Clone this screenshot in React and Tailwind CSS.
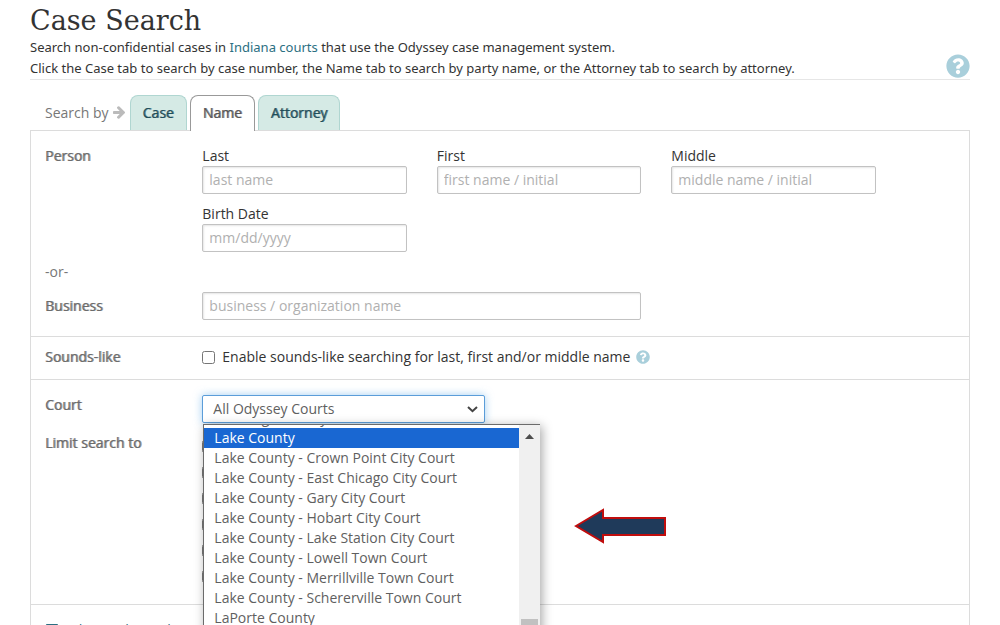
import { useState } from "react";
import { FaQuestionCircle, FaMinusSquare } from "react-icons/fa";

const courts = [
  "LaGrange County",
  "Lake County",
  "Lake County - Crown Point City Court",
  "Lake County - East Chicago City Court",
  "Lake County - Gary City Court",
  "Lake County - Hobart City Court",
  "Lake County - Lake Station City Court",
  "Lake County - Lowell Town Court",
  "Lake County - Merrillville Town Court",
  "Lake County - Schererville Town Court",
  "LaPorte County",
];

const limits = [
  "Civil",
  "Criminal",
  "Family",
  "Probate",
  "Traffic",
  "Commercial",
];

const inputClass =
  "block h-7 w-full rounded-xs border border-[#c2c2c2] bg-white px-1.5 pb-0.5 text-sm text-[#444] placeholder-[#b0b0b0] shadow-[inset_1px_1px_2px_rgba(0,0,0,0.1)] outline-none";

const rowLabelClass =
  "col-span-2 col-start-1 px-3.5 text-[#6b6b6b] [text-shadow:1px_0_#6b6b6bb0]";

const Field = ({ id, label, placeholder }) => (
  <div className="col-span-3 px-[15px]">
    <label htmlFor={id} className="block text-[#333]">
      {label}
    </label>
    <input id={id} type="text" placeholder={placeholder} className={inputClass} />
  </div>
);

const Tab = ({ name, active, onClick }) => (
  <button
    type="button"
    role="tab"
    aria-selected={active}
    onClick={onClick}
    className={
      active
        ? "relative -mb-px h-9 rounded-t-lg border border-b-0 border-[#999] bg-white px-3 pb-0.5 text-[#555] [text-shadow:1px_0_#555555b0]"
        : "h-[35px] rounded-t-lg border border-b-0 border-[#b0d6d1] bg-[#d5eae5] px-3 text-[#1f4e5a] [text-shadow:1px_0_#1f4e5ab0]"
    }
  >
    {name}
  </button>
);

const ArrowRight = () => (
  <svg width="12" height="13" viewBox="0 181 1472 1558" fill="#bbb" aria-hidden="true">
    <path d="M1472 960q0 54-37 91l-651 651q-39 37-91 37-51 0-90-37l-75-75q-38-38-38-91t38-91l293-293H117q-52 0-84.500-37.500T0 1024V896q0-53 32.500-90.500T117 768h704L528 474q-38-36-38-90t38-90l75-75q38-38 90-38 53 0 91 38l651 651q37 35 37 90z" />
  </svg>
);

const CourtMenu = ({ selected, onSelect }) => (
  <div className="absolute top-[29px] left-4 z-10 flex h-[320px] w-[337px] overflow-hidden border border-r-0 border-[#6b6b6b] bg-white shadow-[2px_2px_10px_rgba(0,0,0,0.35)]">
    <ul role="listbox" aria-label="Courts" className="-mt-[17px] flex-1">
      {courts.map((court) => (
        <li
          key={court}
          role="option"
          aria-selected={court === selected}
          onClick={() => onSelect(court)}
          className={
            court === selected
              ? "h-5 cursor-default bg-[#1967d2] px-2.5 text-white"
              : "h-5 cursor-default px-2.5 text-[#5f5f5f]"
          }
        >
          {court}
        </li>
      ))}
    </ul>
    <div className="flex w-[21px] flex-col items-center bg-[#f0f0f0] pt-[9px]">
      <svg width="9" height="5" viewBox="0 0 9 5" aria-hidden="true">
        <path d="M0 5 4.5 0 9 5Z" fill="#4d4d4d" />
      </svg>
      <div className="mt-[180px] h-16 w-[17px] bg-[#c1c1c1]"></div>
    </div>
  </div>
);

const App = () => {
  const [tab, setTab] = useState("Name");
  const [court, setCourt] = useState("Lake County");

  return (
    <div className="h-screen overflow-hidden bg-white px-[30px] font-['Open_Sans','Liberation_Sans',sans-serif] text-sm leading-5 text-[#333]">
      <header className="flex items-end justify-between border-b border-[#e6e6e6]">
        <div>
          <h1 className="h-[37px] font-['DejaVu_Serif',serif] text-[27px] leading-[41px] text-[#333]">
            Case Search
          </h1>
          <p className="font-['Noto_Sans','Open_Sans',sans-serif] text-[13px] leading-[21px]">
            Search non-confidential cases in{" "}
            <a href="#courts" className="text-[#2b6f82]">
              Indiana courts
            </a>{" "}
            that use the Odyssey case management system.
            <br />
            Click the Case tab to search by case number, the Name tab to search
            by party name, or the Attorney tab to search by attorney.
          </p>
        </div>
        <button type="button" aria-label="Help" className="mb-px text-[#a9cfdb]">
          <FaQuestionCircle className="size-6" />
        </button>
      </header>

      <main>
        <div role="tablist" className="flex h-[50px] items-end gap-[3px] pl-[15px]">
          <div className="flex h-[35px] items-center gap-1 pr-0.5 text-[#777]">
            Search by
            <ArrowRight />
          </div>
          {["Case", "Name", "Attorney"].map((name) => (
            <Tab
              key={name}
              name={name}
              active={tab === name}
              onClick={() => setTab(name)}
            />
          ))}
        </div>

        <form className="border border-[#dcdcdc]">
          <section className="grid grid-cols-12 gap-y-2.5 border-b border-[#dcdcdc] pt-[15px] pb-4">
            <h2 className={rowLabelClass}>Person</h2>
            <Field id="last" label="Last" placeholder="last name" />
            <Field id="first" label="First" placeholder="first name / initial" />
            <Field id="middle" label="Middle" placeholder="middle name / initial" />
            <div className="col-span-2 col-start-1"></div>
            <Field id="birth" label="Birth Date" placeholder="mm/dd/yyyy" />
            <p className="col-span-12 px-3.5 text-[#777]">-or-</p>
            <label htmlFor="business" className={`${rowLabelClass} pt-1`}>
              Business
            </label>
            <div className="col-span-6 px-[15px]">
              <input
                id="business"
                type="text"
                placeholder="business / organization name"
                className={inputClass}
              />
            </div>
          </section>

          <section className="grid grid-cols-12 border-b border-[#dcdcdc] pt-2.5 pb-3">
            <h2 className={rowLabelClass}>Sounds-like</h2>
            <div className="col-span-10 flex items-center px-[15px]">
              <input id="sounds" type="checkbox" className="size-[13px]" />
              <label htmlFor="sounds" className="pr-1.5 pl-[7px]">
                Enable sounds-like searching for last, first and/or middle name
              </label>
              <button type="button" aria-label="Sounds-like help" className="text-[#a9cfdb]">
                <FaQuestionCircle className="size-3.5" />
              </button>
            </div>
          </section>

          <section className="grid grid-cols-12 gap-y-2.5 border-b border-[#dcdcdc] pt-[15px] pb-[15px]">
            <label htmlFor="court" className={rowLabelClass}>
              Court
            </label>
            <div className="relative col-span-4 px-[15px]">
              <select
                id="court"
                className="block h-7 w-full appearance-none rounded-xs border border-[#5b9dd9] bg-white px-2.5 text-[#5f5f5f] shadow-[0_0_8px_rgba(102,175,233,0.6)] outline-none"
              >
                <option>All Odyssey Courts</option>
              </select>
              <svg
                className="pointer-events-none absolute top-[11px] right-[22px]"
                width="11"
                height="7"
                viewBox="0 0 11 7"
                fill="none"
                aria-hidden="true"
              >
                <path d="M1 1 5.5 5.2 10 1" stroke="#444" strokeWidth="2" />
              </svg>
              <CourtMenu selected={court} onSelect={setCourt} />
            </div>
            <h2 className={rowLabelClass}>Limit search to</h2>
            <div className="col-span-4 flex flex-col px-[15px]">
              {limits.map((limit) => (
                <div key={limit} className="flex h-[26px] items-center">
                  <input type="checkbox" aria-label={limit} className="size-[13px]" />
                </div>
              ))}
            </div>
            <div className="col-span-6 flex items-center pt-[30px] pl-[74px]">
              <svg width="92" height="36" viewBox="0 0 92 36" aria-hidden="true">
                <path
                  d="M2 18 29 2V10H91V27H29V34Z"
                  fill="#1f3a5a"
                  stroke="#c00d0d"
                  strokeWidth="2"
                />
              </svg>
            </div>
          </section>

          <section className="px-3.5 pt-[15px] pb-4">
            <a href="#advanced" className="flex items-center gap-1.5 text-[#2b6f82]">
              <FaMinusSquare className="size-3.5" />
              Advanced search
            </a>
          </section>
        </form>
      </main>
    </div>
  );
};

export default App;
